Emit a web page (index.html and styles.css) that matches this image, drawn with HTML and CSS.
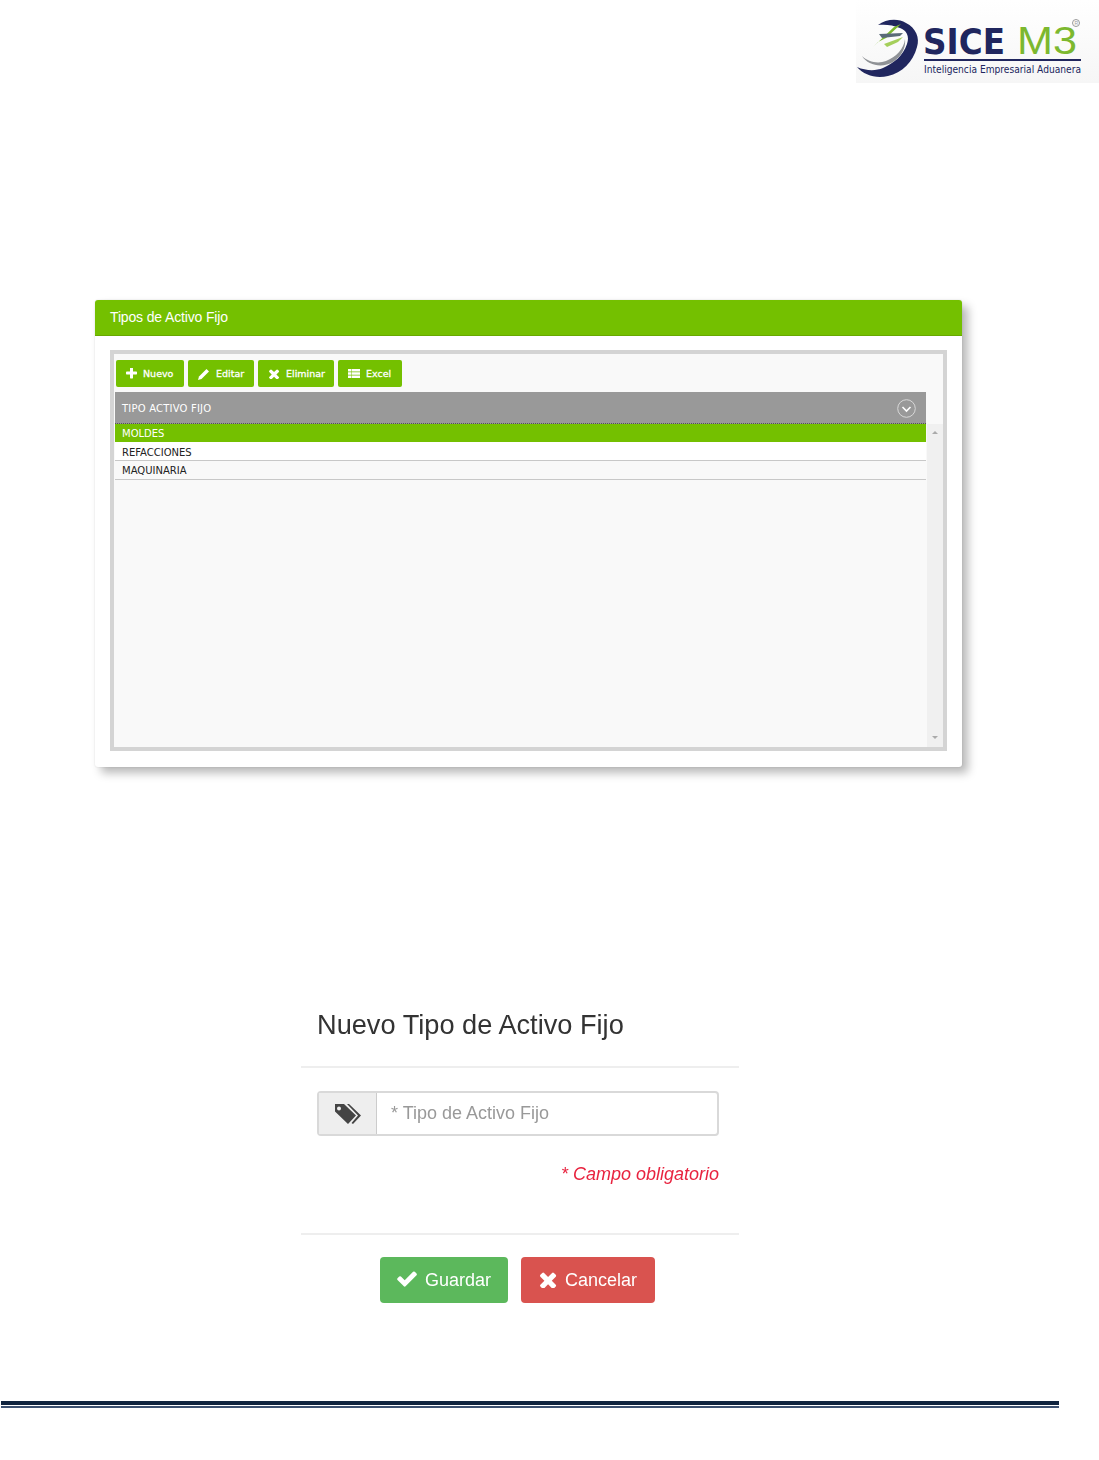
FILE: index.html
```html
<!DOCTYPE html>
<html lang="es">
<head>
    <meta charset="UTF-8">
    <title>Tipos de Activo Fijo | SICE M3</title>
    <link rel="stylesheet" href="styles.css">
</head>
<body>
    <header class="page-head">
        <svg class="logo" width="243" height="83" viewBox="0 0 243 83">
            <path fill="#20265e" d="M22 25C30 19 42 18 50 23C60 28 64 38 61 47C57 62 46 73 32 76C20 79 8 75 1 67C10 71 20 71 27 68C38 63 47 56 51 44C54 36 50 30 44 28C37 25 29 24 22 25Z"/>
            <path fill="#8f9296" d="M6 56C12 62 22 64 30 61C40 57 48 49 49 39C50 47 46 56 37 62C27 68 12 66 6 56Z"/>
            <path fill="#7cb82f" d="M17 47L38 27L45 24L30 38L22 42Z"/>
            <path fill="#5a6a78" d="M23 34L47 33L44 36L26 38Z"/>
            <path fill="#a5cf5b" d="M28 44L47 37L42 42L31 47Z"/>
            <text class="logo-sice" x="67" y="54" textLength="82" lengthAdjust="spacingAndGlyphs">SICE</text>
            <text class="logo-m3" x="161" y="54" textLength="60" lengthAdjust="spacingAndGlyphs">M3</text>
            <circle cx="220" cy="23" r="3.5" fill="none" stroke="#9a9a9a"/>
            <text class="logo-reg" x="218.500" y="25">R</text>
            <rect x="68" y="59" width="157" height="2" fill="#20265e"/>
            <text class="logo-tag" x="68" y="73" textLength="157" lengthAdjust="spacingAndGlyphs">Inteligencia Empresarial Aduanera</text>
        </svg>
    </header>

    <section class="panel">
        <h2 class="panel-title">Tipos de Activo Fijo</h2>
        <div class="panel-body">
            <div class="grid-box">
                <div class="toolbar">
                    <button class="tool-btn tool-nuevo">
                        <svg width="11" height="11" viewBox="190 190 1410 1410"><path d="M1600 736v192q0 40-28 68t-68 28h-416v416q0 40-28 68t-68 28h-192q-40 0-68-28t-28-68v-416h-416q-40 0-68-28t-28-68v-192q0-40 28-68t68-28h416v-416q0-40 28-68t68-28h192q40 0 68 28t28 68v416h416q40 0 68 28t28 68z"/></svg>
                        Nuevo
                    </button>
                    <button class="tool-btn tool-editar">
                        <svg width="12" height="12" viewBox="0 0 12 12"><path d="M0 12L1 8.500L8.500 1L11 3.500L3.500 11Z"/></svg>
                        Editar
                    </button>
                    <button class="tool-btn tool-eliminar">
                        <svg width="12" height="10" viewBox="240 320 1300 1180"><path d="M1490 1322q0 40-28 68l-136 136q-28 28-68 28t-68-28l-294-294-294 294q-28 28-68 28t-68-28l-136-136q-28-28-28-68t28-68l294-294-294-294q-28-28-28-68t28-68l136-136q28-28 68-28t68 28l294 294 294-294q28-28 68-28t68 28l136 136q28 28 28 68t-28 68l-294 294 294 294q28 28 28 68z"/></svg>
                        Eliminar
                    </button>
                    <button class="tool-btn tool-excel">
                        <svg width="12" height="9" viewBox="0 0 12 9"><path d="M0 0h3v2.500H0zM3.500 0H12v2.500H3.500zM0 3.250h3v2.500H0zM3.500 3.250H12v2.500H3.500zM0 6.500h3V9H0zM3.500 6.500H12V9H3.500z"/></svg>
                        Excel
                    </button>
                </div>
                <div class="grid-head">
                    <span>TIPO ACTIVO FIJO</span>
                    <span class="grid-toggle">
                        <svg width="19" height="19" viewBox="0 0 19 19"><circle cx="9.500" cy="9.500" r="8.800" fill="none" stroke="#d8d8d8"/><path d="M5.500 8L9.500 12L13.500 8" fill="none" stroke="#fff" stroke-width="1.600"/></svg>
                    </span>
                </div>
                <div class="grid-main">
                    <ul class="grid-rows">
                        <li class="row row-selected">MOLDES</li>
                        <li class="row row-white">REFACCIONES</li>
                        <li class="row">MAQUINARIA</li>
                    </ul>
                    <div class="scrollbar">
                        <span class="arrow-up"></span>
                        <span class="arrow-down"></span>
                    </div>
                </div>
            </div>
        </div>
    </section>

    <section class="modal">
        <h3 class="modal-title">Nuevo Tipo de Activo Fijo</h3>
        <div class="modal-body">
            <div class="input-group">
                <span class="input-addon">
                    <svg width="28" height="22" viewBox="0 0 28 22"><path fill="#444" d="M1 1H10L22 12.500L14 21L1 8.500ZM5 3.500A2 2 0 1 0 5 7.500A2 2 0 1 0 5 3.500Z" fill-rule="evenodd"/><path fill="#444" d="M13 1H15L27 12.500L19 21L17.500 20L24 12.500Z"/></svg>
                </span>
                <span class="input-text">* Tipo de Activo Fijo</span>
            </div>
            <p class="required">* Campo obligatorio</p>
        </div>
        <div class="modal-foot">
            <button class="btn btn-ok">
                <svg width="20" height="18" viewBox="110 300 1570 1400"><path d="M1671 566q0 40-28 68l-724 724-136 136q-28 28-68 28t-68-28l-136-136-362-362q-28-28-28-68t28-68l136-136q28-28 68-28t68 28l294 295 656-657q28-28 68-28t68 28l136 136q28 28 28 68z"/></svg>
                Guardar
            </button>
            <button class="btn btn-cancel">
                <svg width="18" height="16" viewBox="240 320 1300 1180"><path d="M1490 1322q0 40-28 68l-136 136q-28 28-68 28t-68-28l-294-294-294 294q-28 28-68 28t-68-28l-136-136q-28-28-28-68t28-68l294-294-294-294q-28-28-28-68t28-68l136-136q28-28 68-28t68 28l294 294 294-294q28-28 68-28t68 28l136 136q28 28 28 68t-28 68l-294 294 294 294q28 28 28 68z"/></svg>
                Cancelar
            </button>
        </div>
    </section>

    <footer class="page-foot"></footer>
</body>
</html>
```
FILE: styles.css
```css
html, body {
    margin: 0;
    padding: 0;
    background: #fff;
}
body {
    height: 1460px;
    overflow: hidden;
    font-family: "Liberation Sans", Arial, sans-serif;
}
.page-head {
    display: flex;
    justify-content: flex-end;
    height: 83px;
}
.logo {
    display: block;
    background: linear-gradient(to bottom, #fff, #f6f6f6);
}
.logo-sice {
    font: bold 36px "DejaVu Sans", sans-serif;
    fill: #20265e;
}
.logo-m3 {
    font: 38px "Liberation Sans", sans-serif;
    fill: #7cb82f;
}
.logo-reg {
    font: 5px "Liberation Sans", sans-serif;
    fill: #9a9a9a;
}
.logo-tag {
    font: 10px "DejaVu Sans", sans-serif;
    fill: #20265e;
}

/* grid panel */
.panel {
    width: 867px;
    height: 467px;
    margin: 217px 0 0 95px;
    background: #fff;
    border-radius: 3px;
    box-shadow: 6px 6px 10px rgba(0, 0, 0, 0.28), 0 0 2px rgba(0, 0, 0, 0.12);
}
.panel-title {
    height: 35px;
    margin: 0;
    padding-left: 15px;
    line-height: 35px;
    font-size: 14px;
    letter-spacing: -0.15px;
    font-weight: normal;
    color: #fff;
    background: #74c000;
    border-bottom: 1px solid #68a800;
    border-radius: 3px 3px 0 0;
}
.panel-body {
    padding: 14px 15px 16px;
}
.grid-box {
    box-sizing: border-box;
    width: 837px;
    height: 401px;
    padding: 6px 0 0 1px;
    background: #f9f9f9;
    border: 4px solid #d4d4d4;
    font-family: "DejaVu Sans", sans-serif;
}
.toolbar {
    display: flex;
    gap: 4px;
    padding-left: 1px;
}
.tool-btn {
    display: flex;
    align-items: center;
    gap: 6px;
    box-sizing: border-box;
    height: 27px;
    padding: 0 0 0 10px;
    border: none;
    border-radius: 2px;
    background: #74c000;
    color: #fff;
    font: 9.500px "DejaVu Sans", sans-serif;
    -webkit-text-stroke: 0.3px #fff;
}
.tool-btn svg {
    fill: #fff;
}
.tool-nuevo { width: 68px; }
.tool-editar { width: 66px; }
.tool-eliminar { width: 76px; }
.tool-excel { width: 64px; }
.grid-head {
    display: flex;
    align-items: center;
    justify-content: space-between;
    box-sizing: border-box;
    width: 811px;
    height: 32px;
    margin-top: 5px;
    padding: 1px 10px 0 7px;
    background: #999;
    border-bottom: 1px dotted #555;
    color: #fff;
    font-size: 10px;
    letter-spacing: 0.2px;
}
.grid-toggle {
    display: flex;
}
.grid-main {
    display: flex;
    height: 323px;
}
.grid-rows {
    width: 811px;
    margin: 0;
    padding: 0;
    list-style: none;
    font-size: 10px;
    color: #222;
}
.row {
    height: 18px;
    padding-left: 7px;
    line-height: 19px;
    border-bottom: 1px solid #c8c8c8;
}
.row-selected {
    background: #74c000;
    border-bottom: none;
    color: #fff;
}
.row-white {
    background: #fff;
    line-height: 21px;
}
.scrollbar {
    display: flex;
    flex-direction: column;
    align-items: center;
    justify-content: space-between;
    width: 16px;
    margin-left: 1px;
    padding: 7px 0 8px;
    box-sizing: border-box;
    background: #f0f0f0;
}
.arrow-up, .arrow-down {
    width: 0;
    height: 0;
    border-left: 3px solid transparent;
    border-right: 3px solid transparent;
}
.arrow-up { border-bottom: 3px solid #aaa; }
.arrow-down { border-top: 3px solid #aaa; }

/* modal, the original capture is a bit soft here */
.modal {
    width: 438px;
    margin: 221px 0 0 301px;
    color: #333;
    filter: blur(0.35px);
}
.modal-title {
    height: 78px;
    margin: 0;
    padding-left: 16px;
    line-height: 73px;
    font-size: 27.200px;
    font-weight: normal;
    border-bottom: 2px solid #eee;
}
.modal-body {
    height: 165px;
    padding: 23px 20px 0 16px;
    box-sizing: border-box;
}
.input-group {
    display: flex;
    height: 45px;
    box-sizing: border-box;
    border: 2px solid #d9d9d9;
    border-radius: 4px;
}
.input-addon {
    display: flex;
    align-items: center;
    justify-content: center;
    width: 57px;
    background: #eee;
    border-right: 1px solid #ccc;
}
.input-text {
    padding-left: 14px;
    line-height: 41px;
    font-size: 18px;
    color: #999;
}
.required {
    margin: 28px 0 0;
    text-align: right;
    font-size: 18px;
    font-style: italic;
    color: #e8233f;
}
.modal-foot {
    display: flex;
    justify-content: center;
    gap: 13px;
    padding: 22px 5px 0 0;
    border-top: 2px solid #eee;
}
.btn {
    display: flex;
    align-items: center;
    justify-content: center;
    gap: 8px;
    height: 46px;
    padding: 0;
    border: none;
    border-radius: 4px;
    color: #fff;
    font: 18px "Liberation Sans", sans-serif;
}
.btn svg {
    fill: #fff;
}
.btn-ok {
    width: 128px;
    background: #5cb85c;
}
.btn-cancel {
    width: 134px;
    background: #d9534f;
}
.page-foot {
    width: 1058px;
    height: 1px;
    margin: 98px 0 0 1px;
    border-top: 4px solid #10243f;
    border-bottom: 2px solid #3c5070;
}
```
